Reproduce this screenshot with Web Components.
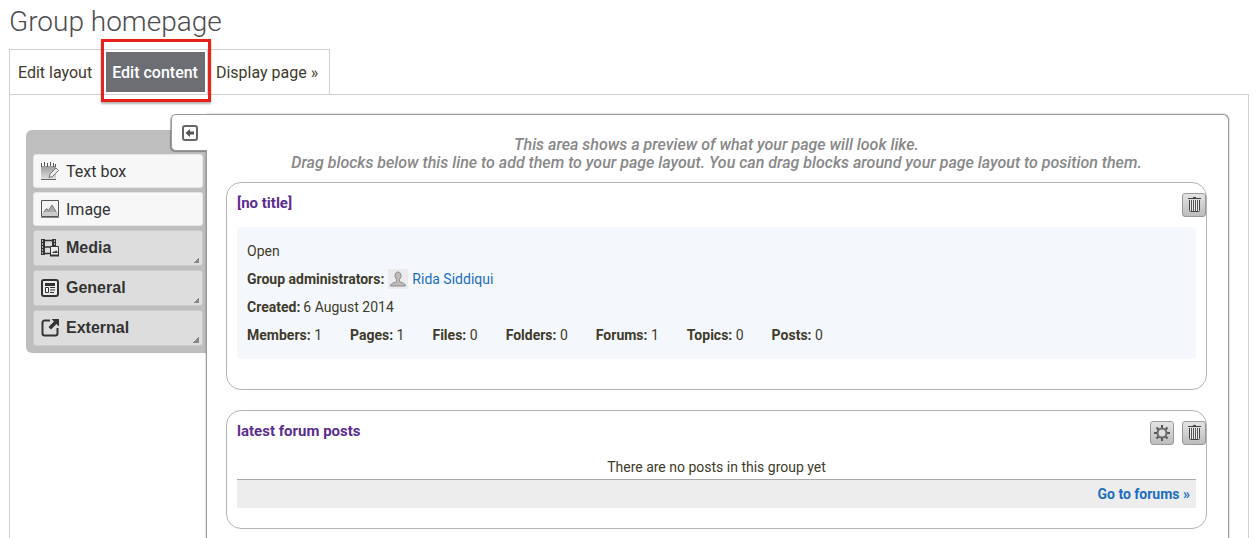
<!DOCTYPE html>
<html lang="en">
<head>
<meta charset="utf-8">
<title>Group homepage</title>
<style>
html, body { margin: 0; }
body { background: #fff; color: #403b2a; font: 14px/28px Roboto, "Liberation Sans", sans-serif; }
</style>
</head>
<body>
<group-page>
  <page-tabs slot="tabs">
    <page-tab label="Edit layout"></page-tab>
    <page-tab label="Edit content" current></page-tab>
    <page-tab label="Display page »"></page-tab>
  </page-tabs>
  <block-palette slot="palette">
    <palette-item><ui-icon slot="icon" name="text"></ui-icon>Text box</palette-item>
    <palette-item><ui-icon slot="icon" name="image"></ui-icon>Image</palette-item>
    <palette-item group><ui-icon slot="icon" name="media"></ui-icon>Media</palette-item>
    <palette-item group><ui-icon slot="icon" name="general"></ui-icon>General</palette-item>
    <palette-item group><ui-icon slot="icon" name="external"></ui-icon>External</palette-item>
  </block-palette>
  <layout-canvas slot="canvas">
    <content-block heading="[no title]">
      <icon-button slot="actions" label="Remove block"><ui-icon name="trash"></ui-icon></icon-button>
      <group-info></group-info>
    </content-block>
    <content-block heading="latest forum posts">
      <icon-button slot="actions" label="Configure block"><ui-icon name="gear"></ui-icon></icon-button>
      <icon-button slot="actions" label="Remove block"><ui-icon name="trash"></ui-icon></icon-button>
      <forum-posts></forum-posts>
    </content-block>
  </layout-canvas>
</group-page>

<script>
const define = (name, render) => customElements.define(name, class extends HTMLElement {
  connectedCallback() {
    if (this.shadowRoot) return;
    this.attachShadow({ mode: 'open' }).innerHTML = render(this);
  }
});

const icons = {
  text: `<defs><linearGradient id="g" x2="0" y2="1"><stop stop-color="#9c9c9c"/><stop offset="1" stop-color="#dedede"/></linearGradient></defs>
    <path d="M0 4h15v13H0z" fill="url(#g)"/><path d="M.5 1v4M3.500 0v4M6.500 1v4M9.500 0v4M12.500 1v4M14.500 2v3" stroke="#555"/>
    <path d="M0 17.500h15" stroke="#666"/><path d="M8 15.500l1-3.500L15 6l2.500 2.500-6 6z" fill="#eee" stroke="#777"/>`,
  image: `<path d="M.5.5h17v16H.5z" fill="#f4f4f4" stroke="#555"/><path d="M1 13h16v3H1z" fill="#ccc"/><path d="M0 17.500h18" stroke="#888"/><path d="M2.500 12.500l3-4 2 2L11 5l4.500 7.500z" fill="#aaa"/><path d="M2.500 12.500l3-4 2 2L11 5l4.500 7.500" fill="none" stroke="#777"/>`,
  media: `<path d="M0 0h3v16H0zM12 0h3v7h-3z" fill="#333"/><path d="M3 1.500h9M3 8h7M3 14.500h6" stroke="#333" stroke-width="1.500"/>
    <path d="M1 2h1M1 5h1M1 8h1M1 11h1M1 14h1M13 2h1M13 5h1" stroke="#ddd" stroke-width="1.500"/><path d="M3.500 0v16M11.500 0v7" stroke="#333"/>
    <path d="M9.500 7.500h8v9h-8z" fill="#eee" stroke="#333"/><path d="M9 16.500h9" stroke="#333" stroke-width="2"/><path d="M11 14l2-2 1 1 1-2 2 3z" fill="#333"/>`,
  general: `<rect x="1" y="1" width="16" height="16" rx="2" fill="#ececec" stroke="#333" stroke-width="2"/><path d="M4 4h10v3H4z" fill="#333"/><path d="M4.500 8.500h3v5h-3z" fill="#fff" stroke="#333"/><path d="M9 8.500h5M9 11h5M9 13.500h4" stroke="#333"/>`,
  external: `<path d="M9 1.500H3.500a2 2 0 0 0-2 2v11a2 2 0 0 0 2 2h11a2 2 0 0 0 2-2V9" fill="none" stroke="#333" stroke-width="2"/><path d="M10.500 0H18v7.500l-2.500-2.500-5.500 5.500-2.500-2.500L13 2.500z" fill="#333"/>`,
  collapse: `<rect x="2" y="2" width="14" height="14" rx="2" fill="#fff" stroke="#666" stroke-width="2"/><path d="M4.500 9L9 5v2.500h4v3H9V13z" fill="#555"/>`,
  trash: `<path d="M3 2.500h13M8 1.500h3" stroke="#444"/><path d="M4.500 4v10.500q0 1 1 1h8q1 0 1-1V4" fill="#e8e8e8" stroke="#444"/><path d="M6.500 4v11M8.500 4v11M10.500 4v11M12.500 4v11" stroke="#555"/>`,
  gear: `<path d="M9 1v16M1 9h16M3.500 3.500l11 11M14.500 3.500l-11 11" stroke="#555" stroke-width="2"/><circle cx="9" cy="9" r="4.500" fill="#ddd" stroke="#6a6a6a" stroke-width="2"/>`,
  person: `<path d="M0 0h20v20H0z" fill="#ebebeb"/><path d="M10 3c-2 0-3 1.500-3 3.500 0 2 1 3 1.500 4v2C7 14 3 13.500 2.500 17h15c-.5-3.500-4.500-3-6-4.500v-2c.5-1 1.500-2 1.500-4C13 4.500 12 3 10 3z" fill="#bbb" stroke="#8c8c8c"/>`
};
define('ui-icon', el => {
  const name = el.getAttribute('name'), size = name === 'person' ? 20 : 18;
  return `<style>:host { display: block; width: ${size}px; height: ${size}px; } svg { display: block; }</style>
    <svg width="${size}" height="${size}" viewBox="0 0 ${size} ${size}" aria-hidden="true">${icons[name]}</svg>`;
});

define('group-page', () => `<style>
  :host { display: flex; flex-direction: column; min-height: 100vh; box-sizing: border-box; padding: 4px 10px 0 9px; }
  h1 { margin: 0 0 9px; color: #4d4d4f; font-size: 28px; line-height: 36px; font-weight: 300; }
  main { flex: 1; display: flex; align-items: stretch; padding: 19px 19px 0 16px; border: 1px solid #d1d1d1; border-bottom: 0; }
  slot[name=canvas] { display: contents; }
  </style><h1>Group homepage</h1><slot name="tabs"></slot>
  <main><slot name="palette"></slot><slot name="canvas"></slot></main>`);

define('page-tabs', () => `<style>
  :host { display: block; }
  nav { display: inline-flex; vertical-align: top; height: 45px; box-sizing: border-box; border: 1px solid #d1d1d1; border-bottom: 0; }
  </style><nav><slot></slot></nav>`);

define('page-tab', el => `<style>
  :host { display: block; position: relative; }
  :host(:not(:last-child)) { border-right: 1px solid #d1d1d1; }
  a { display: block; padding: 0 11px 0 8px; color: #403b2a; font-size: 16px; line-height: 46px; text-decoration: none; white-space: nowrap; }
  :host([current]) { padding: 2px; }
  :host([current]) a { height: 40px; padding: 0 7px 0 6px; background: #6d6e73; color: #fff; font-weight: 500; line-height: 42px; }
  .ring { display: none; }
  :host([current]) .ring { display: block; position: absolute; inset: -11px -4px -8px -3px; border: 3px solid #e8201a; box-shadow: 0 2px 2px rgba(0,0,0,.3); pointer-events: none; }
  </style><a href="#"${el.hasAttribute('current') ? ' aria-current="page"' : ''}>${el.getAttribute('label')}</a><span class="ring"></span>`);

define('block-palette', () => `<style>
  :host { display: block; flex: none; width: 180px; padding-top: 16px; }
  .box { display: flex; flex-direction: column; gap: 4px; padding: 24px 3px 7px 7px; border-radius: 6px 0 0 6px; background: #bebebe; }
  </style><div class="box"><slot></slot></div>`);

define('palette-item', () => `<style>
  :host { display: block; }
  button { position: relative; display: flex; align-items: center; gap: 7px; width: 100%; height: 34px; padding: 0 7px; border: 1px solid #e6e6e6; border-radius: 3px; background: #f7f7f7; color: #333; font: 16px/20px Roboto, "Liberation Sans", sans-serif; text-align: left; }
  :host(:not([group])) span { padding-top: 2px; }
  :host([group]) button { height: 36px; background: #ddd; border-color: #cacaca; font: bold 16px/20px "Liberation Sans", sans-serif; }
  :host([group]) button::after { content: ""; position: absolute; right: 3px; bottom: 2px; width: 6px; height: 6px; background: linear-gradient(135deg, transparent 50%, #888 50%); }
  </style><button type="button"><slot name="icon"></slot><span><slot></slot></span></button>`);

define('layout-canvas', () => `<style>
  :host { display: block; position: relative; flex: 1; min-width: 0; padding: 21px 21px 20px 19px; border: 1px solid #999; border-bottom: 0; border-radius: 0 6px 0 0; background: #fff; box-shadow: 0 0 2px rgba(0,0,0,.35); }
  .toggle { position: absolute; left: -36px; top: -1px; width: 36px; height: 37px; padding: 0 0 0 9px; border: 1px solid #999; border-right: 0; border-radius: 5px 0 0 5px; background: #fff; box-shadow: -1px 1px 1px rgba(0,0,0,.3); }
  p { margin: 0 0 10px; color: #888; font-size: 16px; line-height: 18px; font-weight: 500; font-style: italic; text-align: center; }
  .blocks { display: flex; flex-direction: column; gap: 20px; }
  </style><button class="toggle" type="button" aria-label="Collapse"><ui-icon name="collapse"></ui-icon></button>
  <p>This area shows a preview of what your page will look like.<br>Drag blocks below this line to add them to your page layout. You can drag blocks around your page layout to position them.</p>
  <div class="blocks"><slot></slot></div>`);

define('content-block', el => `<style>
  :host { display: block; position: relative; padding: 6px 10px 20px; border: 1px solid #b3b3b3; border-radius: 15px; }
  h2 { margin: 0 0 10px; color: #5c2d91; font-size: 15px; line-height: 28px; font-weight: 700; }
  .actions { position: absolute; top: 10px; right: 0; display: flex; gap: 8px; }
  </style><h2>${el.getAttribute('heading')}</h2><div class="actions"><slot name="actions"></slot></div><slot></slot>`);

define('icon-button', el => `<style>
  :host { display: block; }
  button { display: grid; place-items: center; width: 24px; height: 24px; padding: 0; border: 1px solid #999; border-radius: 3px; background: linear-gradient(#e4e4e4, #bcbcbc); }
  </style><button type="button" aria-label="${el.getAttribute('label')}"><slot></slot></button>`);

const stats = { Members: 1, Pages: 1, Files: 0, Folders: 0, Forums: 1, Topics: 0, Posts: 0 };
define('group-info', () => `<style>
  :host { display: block; margin-bottom: 10px; padding: 10px; border-radius: 4px; background: #f4f8fc; }
  div { display: flex; align-items: center; gap: 3px; }
  .admins { gap: 4px; }
  .stats { gap: 28px; }
  b { font-weight: 700; }
  a { color: #1d6dbe; text-decoration: none; }
  </style><div>Open</div>
  <div class="admins"><b>Group administrators:</b> <ui-icon name="person"></ui-icon> <a href="#">Rida Siddiqui</a></div>
  <div><b>Created:</b> 6 August 2014</div>
  <div class="stats">${Object.entries(stats).map(([k, v]) => `<span><b>${k}:</b> ${v}</span>`).join('')}</div>`);

define('forum-posts', () => `<style>
  :host { display: block; }
  p { margin: 0; padding: 1px 0; border-bottom: 1px solid #aaa; line-height: 22px; text-align: center; }
  div { padding: 0 6px; background: #ededed; text-align: right; }
  a { color: #1d6dbe; font-weight: 700; text-decoration: none; }
  </style><p>There are no posts in this group yet</p><div><a href="#">Go to forums »</a></div>`);
</script>
</body>
</html>
